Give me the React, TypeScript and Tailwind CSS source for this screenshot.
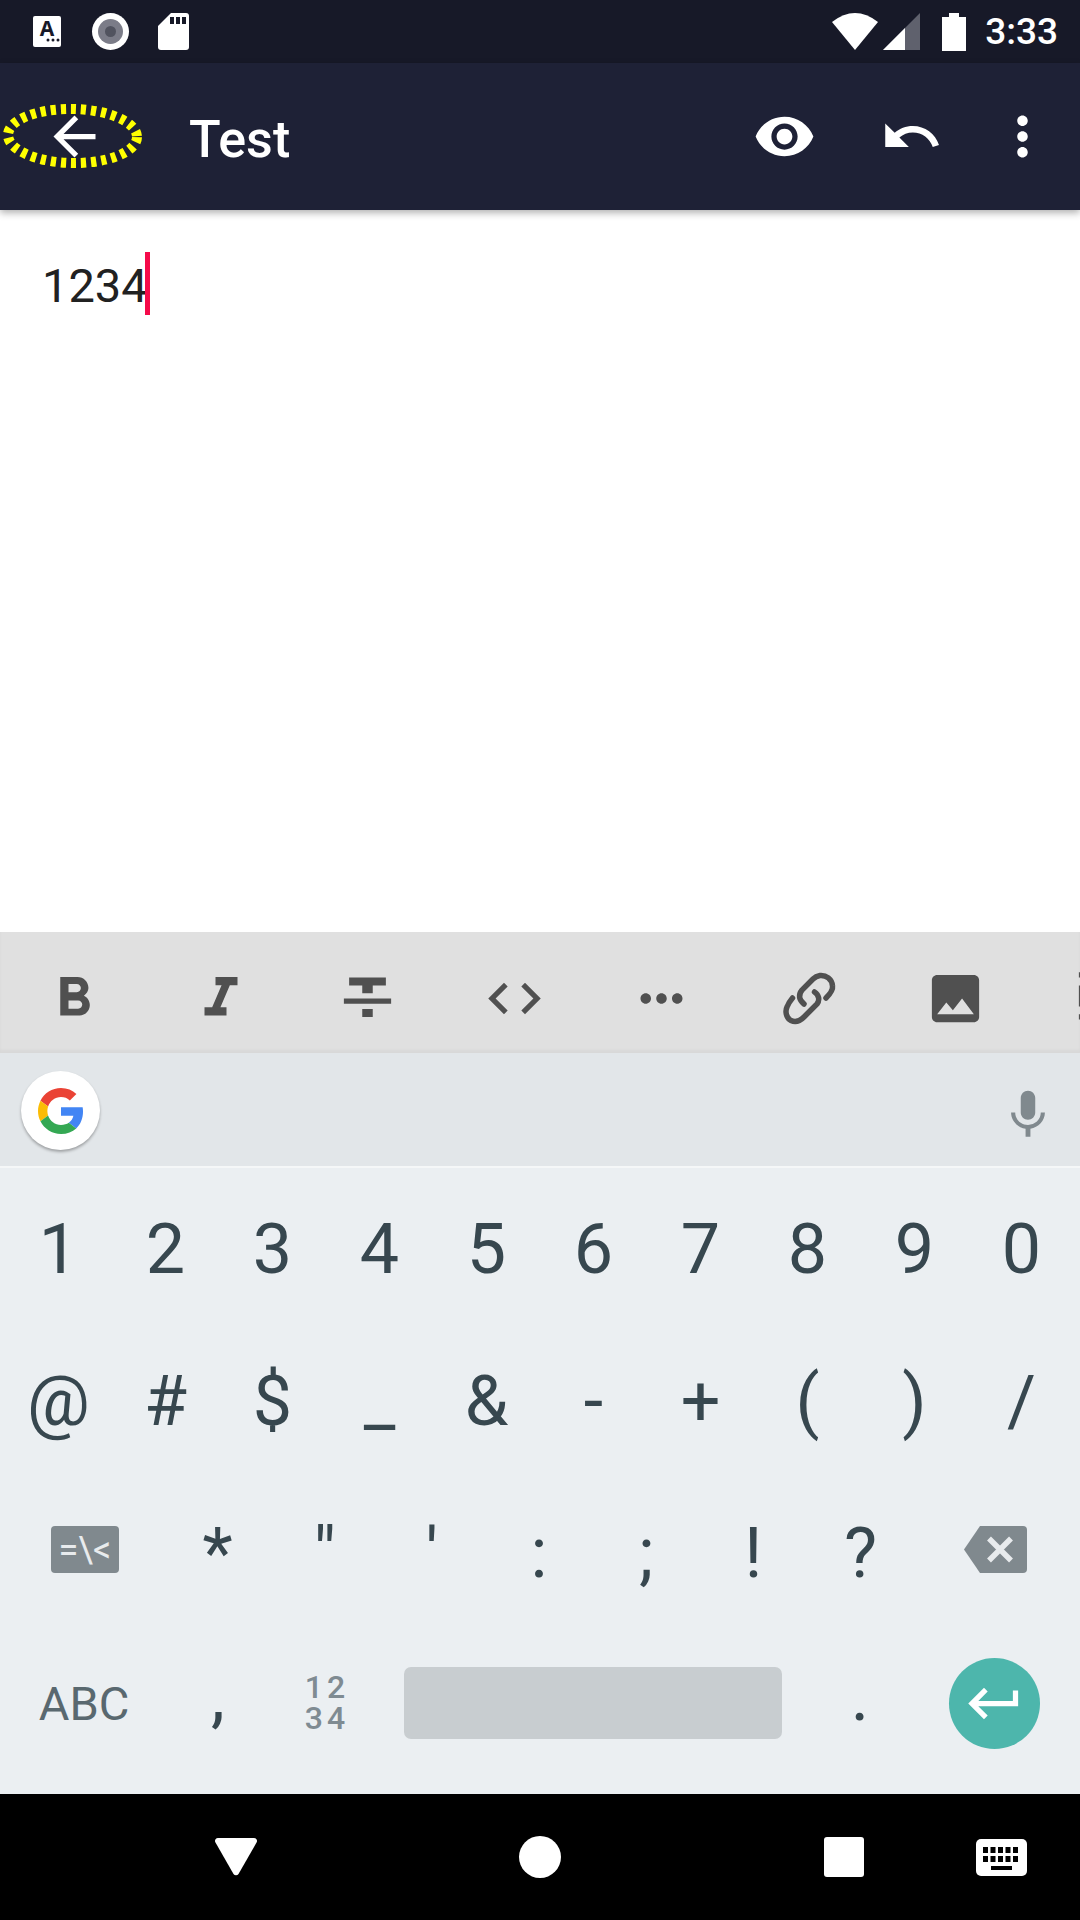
import type { ReactNode } from "react";

const ROBOTO = "font-['Roboto','Liberation_Sans',sans-serif]";

const DIGITS = ["1", "2", "3", "4", "5", "6", "7", "8", "9", "0"];
const SYMBOLS = ["@", "#", "$", "_", "&", "-", "+", "(", ")", "/"];
const PUNCTUATION = ["*", '"', "'", ":", ";", "!", "?"];

function MaterialIcon({
  d,
  className,
}: {
  d: string;
  className?: string;
}) {
  return (
    <svg aria-hidden className={className} fill="currentColor" viewBox="0 0 24 24">
      <path d={d} />
    </svg>
  );
}

function StatusBar() {
  return (
    <div className="flex h-[63px] shrink-0 items-center bg-[#171928] pl-[33px] pr-[22px]">
      <div className="flex h-[31px] w-[28px] flex-col items-center rounded-[2px] bg-white">
        <span className="mt-[3px] text-[21px] leading-[19px] font-bold text-[#171928]">
          A
        </span>
        <svg className="ml-[12px] h-[4px] w-[14px]" fill="#171928" viewBox="0 0 14 4">
          <circle cx="2" cy="2" r="1.5" />
          <circle cx="7" cy="2" r="1.5" />
          <circle cx="12" cy="2" r="1.5" />
        </svg>
      </div>
      <div className="ml-[31px] flex size-[37px] items-center justify-center rounded-full bg-white">
        <div className="flex size-[25px] items-center justify-center rounded-full bg-[#7b7c88]">
          <div className="size-[11px] rounded-full bg-[#51535f]" />
        </div>
      </div>
      <svg className="ml-[29px] h-[37px] w-[31px]" viewBox="0 0 31 37">
        <path
          d="M13 0h15a3 3 0 0 1 3 3v31a3 3 0 0 1-3 3H3a3 3 0 0 1-3-3V13z"
          fill="#fff"
        />
        <path d="M12 4h4v7h-4zM18 4h4v7h-4zM24 4h4v7h-4z" fill="#171928" />
      </svg>
      <svg className="ml-auto h-[37px] w-[46px]" viewBox="0 0 46 37">
        <path d="M0 9Q23 -9 46 9L23 37z" fill="#fff" />
      </svg>
      <svg className="ml-[5px] h-[37px] w-[37px]" viewBox="0 0 37 37">
        <path d="M37 0v37H0z" fill="#5f616d" />
        <path d="M22 15v22H0z" fill="#fff" />
      </svg>
      <svg className="ml-[22px] h-[38px] w-[24px]" viewBox="0 0 24 38">
        <path d="M7 0h10v4h7v34H0V4h7z" fill="#fff" />
      </svg>
      <span className={`${ROBOTO} ml-[19px] text-[37px] leading-none font-medium text-white`}>
        3:33
      </span>
    </div>
  );
}

function AppBar() {
  return (
    <header className="relative z-10 flex h-[147px] shrink-0 items-center bg-[#1e2136] pl-[43px] shadow-[0_3px_7px_rgba(0,0,0,0.3)]">
      <MaterialIcon
        className="size-[63px] text-white"
        d="M20 11H7.83l5.59-5.59L12 4l-8 8 8 8 1.41-1.41L7.83 13H20v-2z"
      />
      {/* yellow highlight drawn over the back arrow */}
      <svg
        aria-hidden
        className="absolute top-[40px] left-[1px] h-[66px] w-[144px]"
        viewBox="0 0 144 66"
      >
        <ellipse
          cx="71.5"
          cy="33"
          fill="none"
          rx="64.5"
          ry="27"
          stroke="#ffff00"
          strokeDasharray="5.2 4.9"
          strokeWidth="10"
          transform="rotate(1 71.5 33)"
        />
      </svg>
      <h1 className={`${ROBOTO} mt-[6px] ml-[83px] text-[52px] leading-none font-medium text-white`}>
        Test
      </h1>
      <MaterialIcon
        className="ml-auto size-[63px] text-white"
        d="M12 4.5C7 4.5 2.73 7.61 1 12c1.73 4.39 6 7.5 11 7.5s9.27-3.11 11-7.5c-1.73-4.39-6-7.5-11-7.5zM12 17c-2.76 0-5-2.24-5-5s2.24-5 5-5 5 2.24 5 5-2.24 5-5 5zm0-8c-1.66 0-3 1.34-3 3s1.34 3 3 3 3-1.34 3-3-1.34-3-3-3z"
      />
      <MaterialIcon
        className="ml-[64px] size-[63px] text-white"
        d="M12.5 8c-2.65 0-5.05.99-6.9 2.6L2 7v9h9l-3.62-3.62c1.39-1.16 3.16-1.88 5.12-1.88 3.54 0 6.55 2.31 7.6 5.5l2.37-.78C21.08 11.03 17.15 8 12.5 8z"
      />
      <MaterialIcon
        className="mr-[26px] ml-[48px] size-[63px] text-white"
        d="M12 8c1.1 0 2-.9 2-2s-.9-2-2-2-2 .9-2 2 .9 2 2 2zm0 2c-1.1 0-2 .9-2 2s.9 2 2 2 2-.9 2-2-.9-2-2-2zm0 6c-1.1 0-2 .9-2 2s.9 2 2 2 2-.9 2-2-.9-2-2-2z"
      />
    </header>
  );
}

function Editor() {
  return (
    <main className="min-h-0 flex-1 bg-white pt-[42px] pl-[42px]">
      <div className="flex h-[63px] items-center">
        <span className={`${ROBOTO} mt-[4px] text-[47px] leading-none text-[#212121]`}>1234</span>
        <div className="-ml-[3px] h-[63px] w-[5px] bg-[#f50a4a]" />
      </div>
    </main>
  );
}

function ToolButton({ children }: { children: ReactNode }) {
  return (
    <div className="flex h-full w-[147px] shrink-0 items-center justify-center text-[#505050]">
      {children}
    </div>
  );
}

function FormatToolbar() {
  return (
    <div className="flex h-[121px] shrink-0 overflow-hidden bg-[#e0e0e0] pt-[12px] shadow-[inset_0_-3px_3px_rgba(0,0,0,0.04)]">
      <ToolButton>
        <MaterialIcon
          className="size-[66px]"
          d="M15.6 10.79c.97-.67 1.65-1.77 1.65-2.79 0-2.26-1.75-4-4-4H7v14h7.04c2.09 0 3.71-1.7 3.71-3.79 0-1.52-.86-2.82-2.15-3.42zM10 6.5h3c.83 0 1.5.67 1.5 1.5s-.67 1.5-1.5 1.5h-3v-3zm3.5 9H10v-3h3.5c.83 0 1.5.67 1.5 1.5s-.67 1.5-1.5 1.5z"
        />
      </ToolButton>
      <ToolButton>
        <MaterialIcon
          className="size-[66px]"
          d="M10 4v3h2.21l-3.42 8H6v3h8v-3h-2.21l3.42-8H18V4z"
        />
      </ToolButton>
      <ToolButton>
        <MaterialIcon
          className="size-[63px]"
          d="M10 19h4v-3h-4v3zM5 4v3h5v3h4V7h5V4H5zM3 14h18v-2H3v2z"
        />
      </ToolButton>
      <ToolButton>
        <MaterialIcon
          className="size-[63px]"
          d="M9.4 16.6L4.8 12l4.6-4.6L8 6l-6 6 6 6 1.4-1.4zm5.2 0l4.6-4.6-4.6-4.6L16 6l6 6-6 6-1.4-1.4z"
        />
      </ToolButton>
      <ToolButton>
        <MaterialIcon
          className="size-[63px]"
          d="M6 10c-1.1 0-2 .9-2 2s.9 2 2 2 2-.9 2-2-.9-2-2-2zm12 0c-1.1 0-2 .9-2 2s.9 2 2 2 2-.9 2-2-.9-2-2-2zm-6 0c-1.1 0-2 .9-2 2s.9 2 2 2 2-.9 2-2-.9-2-2-2z"
        />
      </ToolButton>
      <ToolButton>
        <svg
          aria-hidden
          className="mt-[3px] ml-[4px] h-[70px] w-[80px]"
          fill="none"
          stroke="currentColor"
          strokeLinecap="round"
          strokeWidth="5.5"
          viewBox="0 0 80 70"
        >
          <path d="M55 33C60 28 62 24 61.5 21C61 14 55 10 49 10.5C46 11 44 12 42 14L31 25C27 30 28 35 33 39" />
          <path d="M43.5 27C48 30 49 35 46 39L33 52C29 56 24 57.5 20 55.5C15 53 14 46 16 42C17 39 19 36 21.5 33" />
        </svg>
      </ToolButton>
      <ToolButton>
        <MaterialIcon
          className="size-[63px]"
          d="M21 19V5c0-1.1-.9-2-2-2H5c-1.1 0-2 .9-2 2v14c0 1.1.9 2 2 2h14c1.1 0 2-.9 2-2zM8.5 13.5l2.5 3.01L14.5 12l4.5 6H5l3.5-4.5z"
        />
      </ToolButton>
      <ToolButton>
        <MaterialIcon
          className="size-[63px]"
          d="M3 2h2v2H3zM3 7h8v8H3zM3 18h2v2H3z"
        />
      </ToolButton>
    </div>
  );
}

function SuggestionBar() {
  return (
    <div className="flex h-[115px] shrink-0 items-center border-b-2 border-[#f5f7f8] bg-[#e2e6e9] pt-[2px] pr-[23px] pl-[21px]">
      <div className="flex size-[79px] items-center justify-center rounded-full bg-white shadow-[0_2px_3px_rgba(0,0,0,0.3)]">
        <svg className="size-[46px]" viewBox="0 0 48 48">
          <path
            d="M24 9.5c3.54 0 6.71 1.22 9.21 3.6l6.85-6.85C35.9 2.38 30.47 0 24 0 14.62 0 6.51 5.38 2.56 13.22l7.98 6.19C12.43 13.72 17.74 9.5 24 9.5z"
            fill="#EA4335"
          />
          <path
            d="M46.98 24.55c0-1.57-.15-3.09-.38-4.55H24v9.02h12.94c-.58 2.96-2.26 5.48-4.78 7.18l7.73 6c4.51-4.18 7.09-10.36 7.09-17.65z"
            fill="#4285F4"
          />
          <path
            d="M10.53 28.59c-.48-1.45-.76-2.99-.76-4.59s.27-3.14.76-4.59l-7.98-6.19C.92 16.46 0 20.12 0 24c0 3.88.92 7.54 2.56 10.78l7.97-6.19z"
            fill="#FBBC05"
          />
          <path
            d="M24 48c6.48 0 11.93-2.13 15.89-5.81l-7.73-6c-2.15 1.45-4.92 2.3-8.16 2.3-6.26 0-11.57-4.22-13.47-9.91l-7.98 6.19C6.51 42.62 14.62 48 24 48z"
            fill="#34A853"
          />
        </svg>
      </div>
      <MaterialIcon
        className="mt-[8px] ml-auto size-[58px] text-[#80898e]"
        d="M12 14c1.66 0 2.99-1.34 2.99-3L15 5c0-1.66-1.34-3-3-3S9 3.34 9 5v6c0 1.66 1.34 3 3 3zm5.3-3c0 3-2.54 5.1-5.3 5.1S6.7 14 6.7 11H5c0 3.41 2.72 6.23 6 6.72V21h2v-3.28c3.28-.48 6-3.3 6-6.72h-1.7z"
      />
    </div>
  );
}

function Key({ label }: { label: string }) {
  return (
    <div className="flex items-center justify-center text-[#37474f]">{label}</div>
  );
}

function Keyboard() {
  return (
    <div className={`${ROBOTO} flex h-[626px] shrink-0 flex-col bg-[#ebeff2] pt-[5px] text-[70px] leading-none`}>
      <div className="grid h-[152px] grid-cols-10 px-[5px]">
        {DIGITS.map((digit) => (
          <Key key={digit} label={digit} />
        ))}
      </div>
      <div className="grid h-[152px] grid-cols-10 px-[5px]">
        {SYMBOLS.map((symbol) => (
          <Key key={symbol} label={symbol} />
        ))}
      </div>
      <div className="grid h-[152px] grid-cols-[164px_repeat(7,1fr)_166px]">
        <div className="flex items-center justify-center pb-[7px] pl-[6px]">
          <div className="flex h-[47px] w-[68px] items-center justify-center rounded-[4px] bg-[#80898e] text-[36px] text-[#e8ebed]">
            =\&lt;
          </div>
        </div>
        {PUNCTUATION.map((mark) => (
          <Key key={mark} label={mark} />
        ))}
        <div className="flex items-center justify-center pr-[4px] pb-[7px]">
          <svg className="h-[47px] w-[63px]" viewBox="0 0 63 47">
            <path
              d="M16 0h43a4 4 0 0 1 4 4v39a4 4 0 0 1-4 4H16L0 23.5z"
              fill="#80898e"
            />
            <path
              d="M25 12.5l22 22M47 12.5l-22 22"
              stroke="#e8ebed"
              strokeWidth="5.5"
            />
          </svg>
        </div>
      </div>
      <div className="grid h-[148px] grid-cols-[164px_108px_108px_426px_108px_166px]">
        <div className="flex items-center justify-center pt-[1px] pl-[4px] text-[47px] text-[#59686f]">
          ABC
        </div>
        <div className="flex items-center justify-center pb-[14px] text-[#37474f]">,</div>
        <div className="flex flex-col items-center justify-center pl-[2px] text-[32px] leading-[31px] font-medium tracking-[4px] text-[#7f8b92]">
          <div>12</div>
          <div>34</div>
        </div>
        <div className="flex items-center px-[24px]">
          <div className="h-[72px] w-full rounded-[7px] bg-[#c8cdd0]" />
        </div>
        <div className="flex items-center justify-center pb-[14px] text-[#37474f]">.</div>
        <div className="flex items-center justify-center pr-[6px]">
          <div className="flex size-[91px] items-center justify-center rounded-full bg-[#4db6ac]">
            <MaterialIcon
              className="size-[63px] text-white"
              d="M19 7v4H5.83l3.58-3.59L8 6l-6 6 6 6 1.41-1.41L5.83 13H21V7z"
            />
          </div>
        </div>
      </div>
    </div>
  );
}

function NavBar() {
  return (
    <nav className="flex h-[126px] shrink-0 items-center bg-black pl-[215px]">
      <svg className="h-[38px] w-[42px]" viewBox="0 0 42 38">
        <path
          d="M3 0h36a3 3 0 0 1 2.8 4L23.5 36a3 3 0 0 1-5 0L.2 4A3 3 0 0 1 3 0z"
          fill="#fff"
        />
      </svg>
      <div className="ml-[262px] size-[42px] rounded-full bg-white" />
      <div className="ml-[263px] size-[40px] rounded-[3px] bg-white" />
      <svg className="ml-[112px] h-[37px] w-[51px]" viewBox="0 0 51 37">
        <rect fill="#fff" height="37" rx="5" width="51" />
        <path
          d="M7 8h5v6H7zM14.5 8h5v6h-5zM22 8h5v6h-5zM29.5 8h5v6h-5zM37 8h5v6h-5zM7 17h5v6H7zM14.5 17h5v6h-5zM22 17h5v6h-5zM29.5 17h5v6h-5zM37 17h5v6h-5zM15 27h21v4H15z"
          fill="#000"
        />
      </svg>
    </nav>
  );
}

export default function App() {
  return (
    <div className="flex h-[1920px] w-[1080px] flex-col overflow-hidden">
      <StatusBar />
      <AppBar />
      <Editor />
      <FormatToolbar />
      <SuggestionBar />
      <Keyboard />
      <NavBar />
    </div>
  );
}
